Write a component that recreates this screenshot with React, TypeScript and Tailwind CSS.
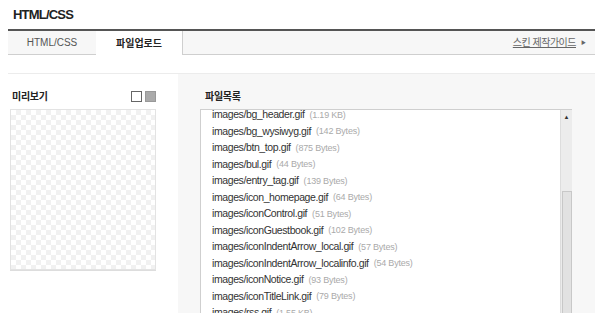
import React from "react";

const files = [
  { name: "images/bg_header.gif", size: "1.19 KB" },
  { name: "images/bg_wysiwyg.gif", size: "142 Bytes" },
  { name: "images/btn_top.gif", size: "875 Bytes" },
  { name: "images/bul.gif", size: "44 Bytes" },
  { name: "images/entry_tag.gif", size: "139 Bytes" },
  { name: "images/icon_homepage.gif", size: "64 Bytes" },
  { name: "images/iconControl.gif", size: "51 Bytes" },
  { name: "images/iconGuestbook.gif", size: "102 Bytes" },
  { name: "images/iconIndentArrow_local.gif", size: "57 Bytes" },
  { name: "images/iconIndentArrow_localinfo.gif", size: "54 Bytes" },
  { name: "images/iconNotice.gif", size: "93 Bytes" },
  { name: "images/iconTitleLink.gif", size: "79 Bytes" },
  { name: "images/rss.gif", size: "1.55 KB" },
  { name: "images/search.gif", size: "210 Bytes" },
];

const font = "font-['Liberation_Sans','Noto_Sans_CJK_KR',sans-serif]";

const App = () => {
  return (
    <div className={`w-[600px] h-[313px] overflow-hidden bg-white px-2 ${font}`}>
      <h1 className="h-[29px] pt-[8px] pl-[5px] text-[13px] leading-[14px] font-bold text-[#222] tracking-[-0.8px]">
        HTML/CSS
      </h1>

      {/* tabs */}
      <div className="w-[587px] border-t-2 border-[#555] flex h-[26px] text-[10px]">
        <div className="w-[88px] bg-[#f7f7f7] border-b border-[#cfcfcf] flex items-center justify-center text-[#555]">
          HTML/CSS
        </div>
        <div className="w-[87px] bg-white border-r border-[#cfcfcf] flex items-center justify-center text-[#222] font-bold">
          파일업로드
        </div>
        <div className="flex-1 bg-[#f7f7f7] border-b border-[#cfcfcf] flex items-center justify-end pr-[9px]">
          <span className="underline text-[#666] text-[10px] tracking-[-0.5px]">스킨 제작가이드</span>
          <span className="ml-[5px] text-[5px] text-[#666]">▶</span>
        </div>
      </div>

      {/* body */}
      <div className="mt-[18px] w-[587px] border-t border-[#ececec] flex h-[240px]">
        <div className="w-[170px] pl-[2px]">
          <div className="flex items-center justify-between h-[35px] pt-[10px] pr-[22px]">
            <span className="pl-[2px] text-[10px] font-bold text-[#222] tracking-[-0.3px]">미리보기</span>
            <div className="flex gap-[3px]">
              <span className="w-[11px] h-[11px] border border-[#666] bg-white" />
              <span className="w-[11px] h-[11px] bg-[#aaa] border border-[#999]" />
            </div>
          </div>
          <div className="w-[146px] h-[161px] border border-[#e3e3e3] bg-[#fff] bg-[repeating-conic-gradient(#f1f1f1_0_25%,#ffffff_0_50%)] bg-[length:10px_10px] shadow-[0_1px_0_#ddd]" />
        </div>

        <div className="flex-1 bg-[#f7f7f7] pl-[22px] pr-[23px]">
          <div className="h-[35px] pt-[17px] pl-[5px] text-[10px] font-bold text-[#222] leading-[12px] tracking-[-0.3px]">
            파일목록
          </div>
          <div className="h-[210px] bg-white border-t border-l border-[#cfcfcf] flex overflow-hidden">
            <ul className="flex-1 pl-[11px] -mt-[3px]">
              {files.map((f) => (
                <li key={f.name} className="h-[16.5px] flex items-center whitespace-nowrap">
                  <span className="text-[10.5px] tracking-[-0.4px] text-[#333]">{f.name}</span>
                  <span className="ml-[5px] text-[9px] tracking-[-0.2px] text-[#aaa]">({f.size})</span>
                </li>
              ))}
            </ul>
            <div className="w-[12px] bg-[#ececec] border-l border-[#ddd] flex flex-col items-center">
              <span className="mt-[4px] text-[6px] leading-[6px] text-[#333]">▲</span>
              <div className="mt-[71px] w-[10px] flex-1 bg-[#e2e2e2] border border-[#c8c8c8] border-b-0" />
            </div>
          </div>
        </div>
      </div>
    </div>
  );
};

export default App;
